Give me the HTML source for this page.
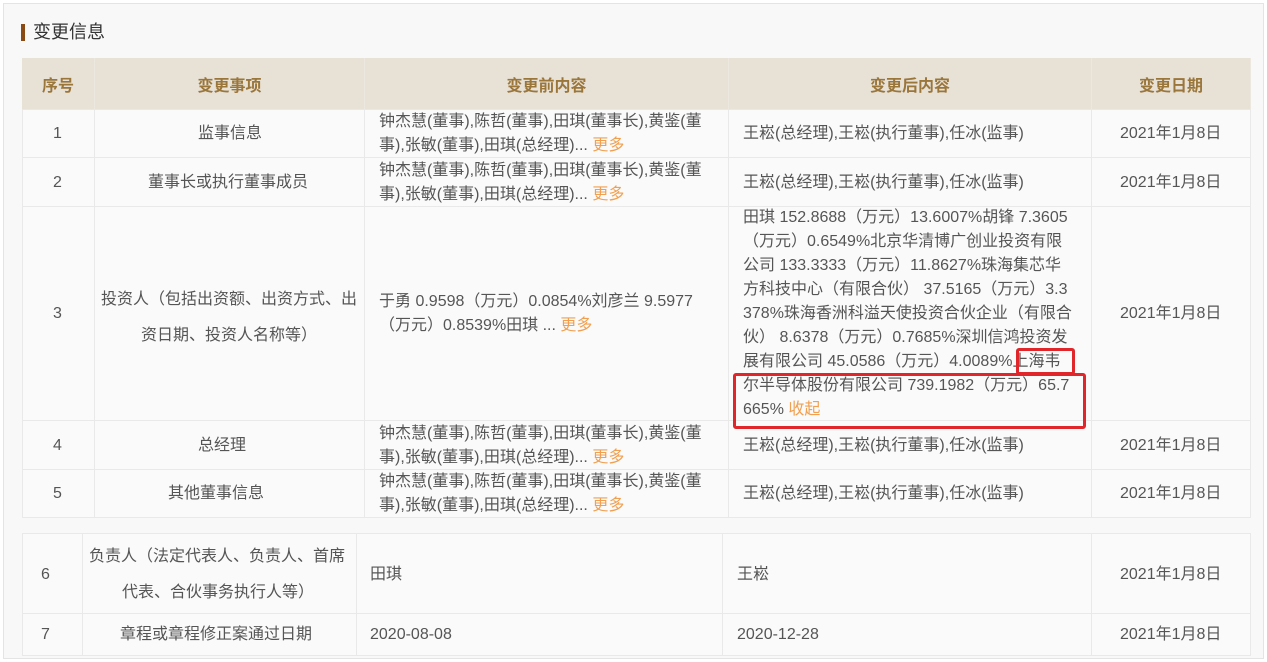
<!DOCTYPE html>
<html><head><meta charset="utf-8"><style>
*{margin:0;padding:0;box-sizing:border-box}
body{width:1267px;height:662px;background:#fff;position:relative;overflow:hidden;font-family:"Liberation Sans","Noto Sans CJK SC",sans-serif;font-size:16px;color:#555}
.panel{position:absolute;left:3px;top:3px;width:1261px;height:656px;background:#f8f8f8;border:1px solid #e4e4e4}
.c{position:absolute;border-right:1px solid #e9e9e9;border-bottom:1px solid #e9e9e9;background:#fafafa}
.h{background:#e8e1d6;color:#9a763b;font-weight:bold;display:flex;align-items:center;justify-content:center;border-color:#ece7df}
.t{position:absolute;white-space:nowrap;line-height:24px}
.m{color:#f0a050}
.r{position:absolute;border:3px solid #e0262a;border-radius:3px}
</style></head><body>
<div class="panel"></div>
<div style="position:absolute;left:21px;top:24px;width:4px;height:17px;background:#8a4a14"></div>
<div class="t" style="left:33px;top:20px;font-size:18px;color:#333">变更信息</div>

<div class="c h" style="left:22px;top:58px;width:73px;height:52px">序号</div>
<div class="c h" style="left:95px;top:58px;width:270px;height:52px">变更事项</div>
<div class="c h" style="left:365px;top:58px;width:364px;height:52px">变更前内容</div>
<div class="c h" style="left:729px;top:58px;width:363px;height:52px">变更后内容</div>
<div class="c h" style="left:1092px;top:58px;width:159px;height:52px">变更日期</div>

<div class="c" style="left:22px;top:110px;width:73px;height:48px;border-left:1px solid #e9e9e9"></div><div class="c" style="left:95px;top:110px;width:270px;height:48px"></div><div class="c" style="left:365px;top:110px;width:364px;height:48px"></div><div class="c" style="left:729px;top:110px;width:363px;height:48px"></div><div class="c" style="left:1092px;top:110px;width:159px;height:48px"></div>
<div class="c" style="left:22px;top:158px;width:73px;height:49px;border-left:1px solid #e9e9e9"></div><div class="c" style="left:95px;top:158px;width:270px;height:49px"></div><div class="c" style="left:365px;top:158px;width:364px;height:49px"></div><div class="c" style="left:729px;top:158px;width:363px;height:49px"></div><div class="c" style="left:1092px;top:158px;width:159px;height:49px"></div>
<div class="c" style="left:22px;top:207px;width:73px;height:214px;border-left:1px solid #e9e9e9"></div><div class="c" style="left:95px;top:207px;width:270px;height:214px"></div><div class="c" style="left:365px;top:207px;width:364px;height:214px"></div><div class="c" style="left:729px;top:207px;width:363px;height:214px"></div><div class="c" style="left:1092px;top:207px;width:159px;height:214px"></div>
<div class="c" style="left:22px;top:421px;width:73px;height:49px;border-left:1px solid #e9e9e9"></div><div class="c" style="left:95px;top:421px;width:270px;height:49px"></div><div class="c" style="left:365px;top:421px;width:364px;height:49px"></div><div class="c" style="left:729px;top:421px;width:363px;height:49px"></div><div class="c" style="left:1092px;top:421px;width:159px;height:49px"></div>
<div class="c" style="left:22px;top:470px;width:73px;height:48px;border-left:1px solid #e9e9e9"></div><div class="c" style="left:95px;top:470px;width:270px;height:48px"></div><div class="c" style="left:365px;top:470px;width:364px;height:48px"></div><div class="c" style="left:729px;top:470px;width:363px;height:48px"></div><div class="c" style="left:1092px;top:470px;width:159px;height:48px"></div>

<div class="c" style="left:22px;top:533px;width:61px;height:81px;border-top:1px solid #e9e9e9;border-left:1px solid #e9e9e9"></div><div class="c" style="left:83px;top:533px;width:274px;height:81px;border-top:1px solid #e9e9e9"></div><div class="c" style="left:357px;top:533px;width:366px;height:81px;border-top:1px solid #e9e9e9"></div><div class="c" style="left:723px;top:533px;width:369px;height:81px;border-top:1px solid #e9e9e9"></div><div class="c" style="left:1092px;top:533px;width:159px;height:81px;border-top:1px solid #e9e9e9"></div>
<div class="c" style="left:22px;top:614px;width:61px;height:42px;border-left:1px solid #e9e9e9"></div><div class="c" style="left:83px;top:614px;width:274px;height:42px"></div><div class="c" style="left:357px;top:614px;width:366px;height:42px"></div><div class="c" style="left:723px;top:614px;width:369px;height:42px"></div><div class="c" style="left:1092px;top:614px;width:159px;height:42px"></div>

<div class="t" style="left:53px;top:122px">1</div>
<div class="t" style="left:198px;top:122px">监事信息</div>
<div class="t" style="left:379px;top:110px">钟杰慧(董事),陈哲(董事),田琪(董事长),黄鉴(董<br>事),张敏(董事),田琪(总经理)... <span class="m">更多</span></div>
<div class="t" style="left:743px;top:122px">王崧(总经理),王崧(执行董事),任冰(监事)</div>
<div class="t" style="left:1120px;top:122px">2021年1月8日</div>

<div class="t" style="left:53px;top:171px">2</div>
<div class="t" style="left:148px;top:171px">董事长或执行董事成员</div>
<div class="t" style="left:379px;top:159px">钟杰慧(董事),陈哲(董事),田琪(董事长),黄鉴(董<br>事),张敏(董事),田琪(总经理)... <span class="m">更多</span></div>
<div class="t" style="left:743px;top:171px">王崧(总经理),王崧(执行董事),任冰(监事)</div>
<div class="t" style="left:1120px;top:171px">2021年1月8日</div>

<div class="t" style="left:53px;top:302px">3</div>
<div class="t" style="left:101px;top:282px;line-height:36px">投资人（包括出资额、出资方式、出<br><span style="padding-left:40px">资日期、投资人名称等）</span></div>
<div class="t" style="left:379px;top:290px">于勇 0.9598（万元）0.0854%刘彦兰 9.5977<br>（万元）0.8539%田琪 ... <span class="m">更多</span></div>
<div class="t" style="left:743px;top:206px">田琪 152.8688（万元）13.6007%胡锋 7.3605<br>（万元）0.6549%北京华清博广创业投资有限<br>公司 133.3333（万元）11.8627%珠海集芯华<br>方科技中心（有限合伙） 37.5165（万元）3.3<br>378%珠海香洲科溢天使投资合伙企业（有限合<br>伙） 8.6378（万元）0.7685%深圳信鸿投资发<br>展有限公司 45.0586（万元）4.0089%上海韦<br>尔半导体股份有限公司 739.1982（万元）65.7<br>665% <span class="m">收起</span></div>
<div class="t" style="left:1120px;top:302px">2021年1月8日</div>
<div class="r" style="left:1016px;top:348px;width:59px;height:27px"></div>
<div class="r" style="left:733px;top:373px;width:353px;height:56px"></div>

<div class="t" style="left:53px;top:434px">4</div>
<div class="t" style="left:198px;top:434px">总经理</div>
<div class="t" style="left:379px;top:422px">钟杰慧(董事),陈哲(董事),田琪(董事长),黄鉴(董<br>事),张敏(董事),田琪(总经理)... <span class="m">更多</span></div>
<div class="t" style="left:743px;top:434px">王崧(总经理),王崧(执行董事),任冰(监事)</div>
<div class="t" style="left:1120px;top:434px">2021年1月8日</div>

<div class="t" style="left:53px;top:482px">5</div>
<div class="t" style="left:168px;top:482px">其他董事信息</div>
<div class="t" style="left:379px;top:470px">钟杰慧(董事),陈哲(董事),田琪(董事长),黄鉴(董<br>事),张敏(董事),田琪(总经理)... <span class="m">更多</span></div>
<div class="t" style="left:743px;top:482px">王崧(总经理),王崧(执行董事),任冰(监事)</div>
<div class="t" style="left:1120px;top:482px">2021年1月8日</div>

<div class="t" style="left:41px;top:563px">6</div>
<div class="t" style="left:89px;top:539px;line-height:36px">负责人（法定代表人、负责人、首席<br><span style="padding-left:33px">代表、合伙事务执行人等）</span></div>
<div class="t" style="left:370px;top:563px">田琪</div>
<div class="t" style="left:737px;top:563px">王崧</div>
<div class="t" style="left:1120px;top:563px">2021年1月8日</div>

<div class="t" style="left:41px;top:623px">7</div>
<div class="t" style="left:120px;top:623px">章程或章程修正案通过日期</div>
<div class="t" style="left:370px;top:623px">2020-08-08</div>
<div class="t" style="left:737px;top:623px">2020-12-28</div>
<div class="t" style="left:1120px;top:623px">2021年1月8日</div>
</body></html>
